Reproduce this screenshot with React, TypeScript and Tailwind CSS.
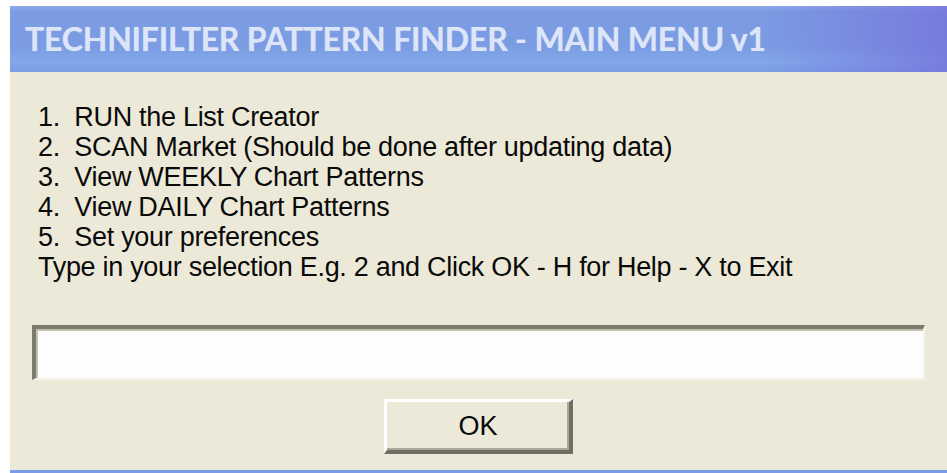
export default function App() {
  const items = [
    "1.  RUN the List Creator",
    "2.  SCAN Market (Should be done after updating data)",
    "3.  View WEEKLY Chart Patterns",
    "4.  View DAILY Chart Patterns",
    "5.  Set your preferences",
    "Type in your selection E.g. 2 and Click OK - H for Help - X to Exit",
  ];

  return (
    <div className="w-[947px] h-[473px] bg-white pl-[10px] pt-[6px] overflow-hidden">
      <div className="flex h-full flex-col">
        {/* caption bar */}
        <div className="relative h-[66px] shrink-0 bg-[linear-gradient(180deg,#8eaaea_0px,#7b9be2_6px,#7b9ce3_40px,#82a8ea_56px,#7a9de4_66px)]">
          <div className="absolute inset-0 bg-[linear-gradient(90deg,rgba(120,120,220,0)_80%,rgba(118,112,218,0.75)_100%)]" />
          <div className="relative flex h-full items-center pl-[15px]">
            <span className="whitespace-pre font-['Lato','Open_Sans',sans-serif] text-[32px] font-bold tracking-[-0.2px] text-[#dde6f8] [text-shadow:0_0_1px_rgba(220,230,250,0.6)]">
              TECHNIFILTER PATTERN FINDER - MAIN MENU v1
            </span>
          </div>
        </div>

        {/* dialog body */}
        <div className="flex flex-1 flex-col border-b-[3px] border-[#7b9be6] bg-[#ece9d8] px-[22px] pt-[30px] font-['Liberation_Sans',Arial,sans-serif] text-[#0a0a0a]">
          <div className="pl-[6px] text-[27px] leading-[30px] tracking-[-0.3px]">
            {items.map((t) => (
              <div key={t} className="whitespace-pre">
                {t}
              </div>
            ))}
          </div>

          <div className="mt-[43px] h-[55px] border-t-[4px] border-l-[4px] border-b-[2px] border-r-[2px] border-t-[#7d7b6c] border-l-[#7d7b6c] border-b-[#f6f4ea] border-r-[#f6f4ea] bg-[#fdfdfd] shadow-[inset_2px_2px_0_#c2bfaf]" />

          <div className="mt-[19px] flex justify-center">
            <button className="flex h-[55px] w-[189px] items-center justify-center border-t-[3px] border-l-[3px] border-b-[4px] border-r-[4px] border-t-white border-l-white border-b-[#716f64] border-r-[#716f64] bg-[#ece9d8] text-[27px] text-[#0a0a0a] shadow-[inset_-2px_-2px_0_#aca899]">
              OK
            </button>
          </div>
        </div>
      </div>
    </div>
  );
}
